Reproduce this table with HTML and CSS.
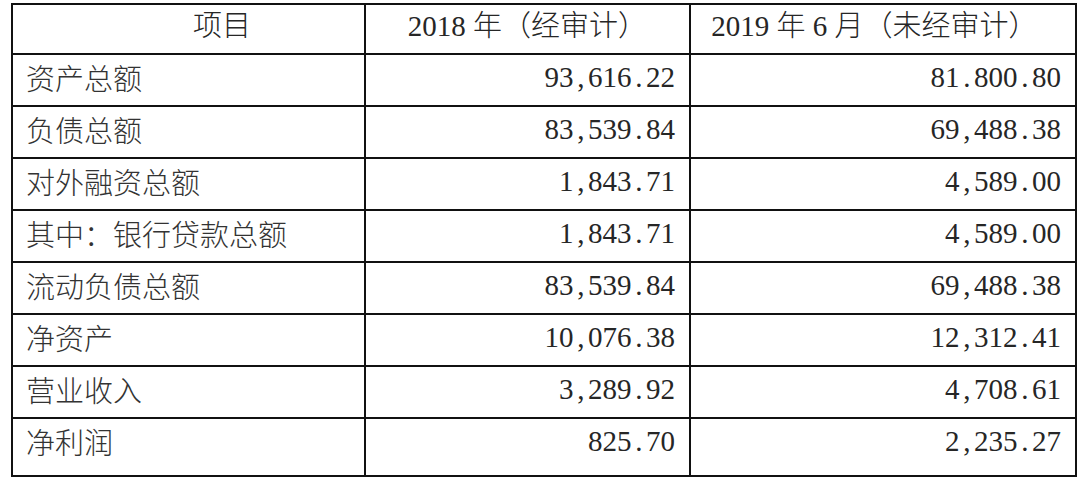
FILE: index.html
```html
<!DOCTYPE html>
<html lang="zh-CN">
<head>
<meta charset="utf-8">
<title>财务数据</title>
<link rel="stylesheet" href="styles.css">
</head>
<body>
<div class="page">
<table class="fin">
  <colgroup>
    <col class="c1"><col class="c2"><col class="c3">
  </colgroup>
  <thead>
    <tr class="head">
      <th class="h1">项目</th>
      <th class="h2">2018 年（经审计）</th>
      <th class="h3">2019 年 6 月（未经审计）</th>
    </tr>
  </thead>
  <tbody>
    <tr><td class="lbl">资产总额</td><td class="num">93<span class="pt">,</span>616<span class="pt">.</span>22</td><td class="num">81<span class="pt">.</span>800<span class="pt">.</span>80</td></tr>
    <tr><td class="lbl">负债总额</td><td class="num">83<span class="pt">,</span>539<span class="pt">.</span>84</td><td class="num">69<span class="pt">,</span>488<span class="pt">.</span>38</td></tr>
    <tr><td class="lbl">对外融资总额</td><td class="num">1<span class="pt">,</span>843<span class="pt">.</span>71</td><td class="num">4<span class="pt">,</span>589<span class="pt">.</span>00</td></tr>
    <tr><td class="lbl">其中：银行贷款总额</td><td class="num">1<span class="pt">,</span>843<span class="pt">.</span>71</td><td class="num">4<span class="pt">,</span>589<span class="pt">.</span>00</td></tr>
    <tr><td class="lbl">流动负债总额</td><td class="num">83<span class="pt">,</span>539<span class="pt">.</span>84</td><td class="num">69<span class="pt">,</span>488<span class="pt">.</span>38</td></tr>
    <tr><td class="lbl">净资产</td><td class="num">10<span class="pt">,</span>076<span class="pt">.</span>38</td><td class="num">12<span class="pt">,</span>312<span class="pt">.</span>41</td></tr>
    <tr><td class="lbl">营业收入</td><td class="num">3<span class="pt">,</span>289<span class="pt">.</span>92</td><td class="num">4<span class="pt">,</span>708<span class="pt">.</span>61</td></tr>
    <tr class="last"><td class="lbl">净利润</td><td class="num">825<span class="pt">.</span>70</td><td class="num">2<span class="pt">,</span>235<span class="pt">.</span>27</td></tr>
  </tbody>
</table>
</div>
</body>
</html>
```

FILE: styles.css
```css
html, body {
  margin: 0;
  padding: 0;
  background: #ffffff;
}

.page {
  padding: 3px 0 0 11px;
}

.fin {
  border-collapse: collapse;
  table-layout: fixed;
  width: 1064px;
  color: #262626;
  font-family: "Liberation Serif", "Noto Sans CJK SC", serif;
  font-size: 29px;
  line-height: 36px;
}

.c1 { width: 353px; }
.c2 { width: 325px; }
.c3 { width: 386px; }

.fin th,
.fin td {
  border: 2px solid #111111;
  padding: 4px 13px 0 13px;
  vertical-align: top;
  font-weight: 400;
  white-space: nowrap;
}

.fin tr { height: 52px; }
.fin tr.head { height: 50px; }
.fin tr.last { height: 58px; }

.fin th {
  text-align: center;
  padding-top: 3px;
  font-weight: 300;
}

.fin th.h1 { padding-left: 80px; }
.fin th.h3 { padding-right: 30px; }

.fin td.lbl {
  font-family: "Noto Sans CJK SC", sans-serif;
  font-weight: 300;
  color: #333333;
  text-align: left;
}

.fin td.num {
  text-align: right;
  padding-right: 14px;
}

.pt {
  display: inline-block;
  width: 0.5em;
  text-align: center;
}
```
